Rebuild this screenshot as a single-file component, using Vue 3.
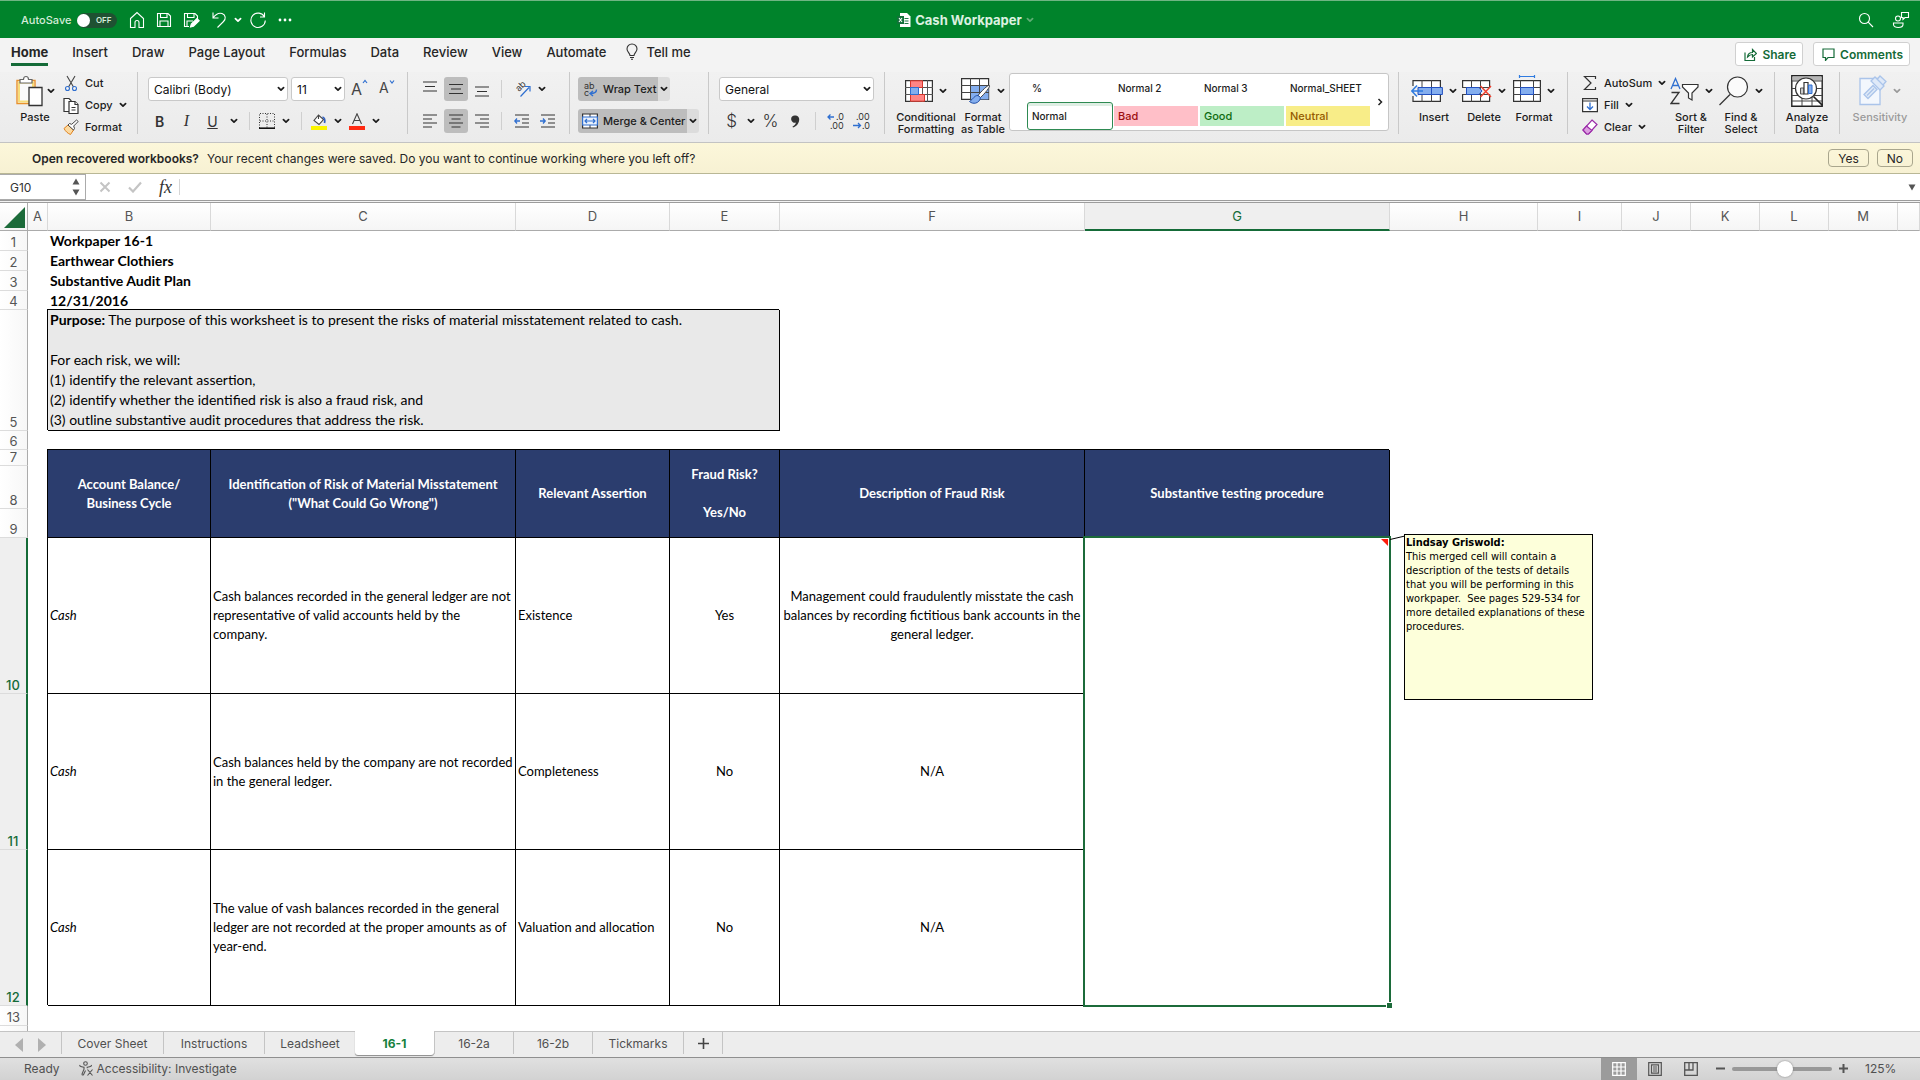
<template>
  <div class="app">
    <svg class="sprite" aria-hidden="true">
      <symbol id="chev" viewBox="0 0 8 8"><path d="M1.4 2.6 4 5.2l2.6-2.6" fill="none" stroke="currentColor" stroke-width="1.7" stroke-linecap="round" stroke-linejoin="round" /></symbol>
    </svg>

    <header class="titlebar">
      <div class="quick">
        <span class="autosave">AutoSave</span>
        <button class="toggle" aria-label="AutoSave off"><i></i>OFF</button>
        <button aria-label="Home">
          <svg width="16" height="18" viewBox="0 0 16 18" class="line"><path d="M1.500 7.500 8 1.500l6.500 6V16.500h-4.500v-5a2 2 0 0 0-4 0v5h-4.500z" /></svg>
        </button>
        <button aria-label="Save">
          <svg width="16" height="16" viewBox="0 0 16 16" class="line"><path d="M1.500 1.500h10.500l2.500 2.500v10.500h-13zM4.500 1.500v4h6.500v-4M4 14.500v-5.500h8v5.500" /></svg>
        </button>
        <button aria-label="Save as">
          <svg width="17" height="16" viewBox="0 0 17 16" class="line"><path d="M6 14.500H1.500v-13h10.500l2.500 2.500v3M4.500 1.500v4h6.500v-4M4 14.500v-5.500h6" /><path d="M7.500 15l.8-3L14 6.500l2.200 2.200-5.700 5.600z" fill="#fff" /></svg>
        </button>
        <button aria-label="Undo">
          <svg width="16" height="18" viewBox="0 0 16 18" class="line"><path d="M2 1.500v5.500h5.500M2 7C4.500 3.500 8 1.500 11 2.500c4 1.500 4 5.500 1.500 8L6.500 16.500" /></svg>
        </button>
        <button class="undo-list" aria-label="Undo list"><svg class="chev"><use href="#chev" /></svg></button>
        <button aria-label="Redo">
          <svg width="18" height="18" viewBox="0 0 18 18" class="line"><path d="M15.500 1.500v4.500h-4.500M15.500 6A7.200 7.200 0 1 0 16.300 9.500" /></svg>
        </button>
        <button aria-label="More">
          <svg width="14" height="4" viewBox="0 0 14 4"><g fill="#fff"><circle cx="2" cy="2" r="1.400" /><circle cx="7" cy="2" r="1.400" /><circle cx="12" cy="2" r="1.400" /></g></svg>
        </button>
      </div>
      <h1 class="doc">
        <svg width="14" height="14" viewBox="0 0 14 14"><path d="M3 0h7l3.500 3.500V14H3z" fill="#fff" /><path d="M7.500 5.500h4M7.500 8h4M7.500 10.500h4" stroke="#1d7b45" stroke-width="1.200" /><path d="M0 3h7v8H0z" fill="#12713a" /><path d="M2 5l3 4M5 5L2 9" stroke="#fff" stroke-width="1.100" /></svg>
        Cash Workpaper
        <svg class="chev dim"><use href="#chev" /></svg>
      </h1>
      <div class="title-right">
        <button aria-label="Search"><svg width="16" height="16" viewBox="0 0 16 16" class="line"><circle cx="6.500" cy="6.500" r="5" /><path d="M10.200 10.200 15 15" /></svg></button>
        <button aria-label="Presence"><svg width="18" height="18" viewBox="0 0 18 18" class="line"><circle cx="6" cy="7.500" r="2.500" /><path d="M1.500 12h9.500v1.500c0 4-9.500 4-9.500 0zM9.500 1.500h7v5h-3.500l-2 2v-2h-1.500z" /></svg></button>
      </div>
    </header>

    <nav class="tabs">
      <button v-for="tab in tabs" :key="tab" :class="{ active: tab === 'Home' }">{{ tab }}</button>
      <button class="tell">
        <svg width="12" height="17" viewBox="0 0 12 17" fill="none" stroke="#333" stroke-width="1.100"><path d="M4 12.500c0-2.500-3-3.500-3-6.500a5 5 0 0 1 10 0c0 3-3 4-3 6.500zM4 14.500h4M5 16.300h2" /></svg>
        Tell me
      </button>
      <div class="tab-actions">
        <button class="pill"><svg width="13" height="13" viewBox="0 0 13 13" fill="none" stroke="#156b38" stroke-width="1.200"><path d="M1 4.500v8h9.500V9M3.500 9c.3-3 2-4.500 5-4.500v-3L12.500 5.500l-4 3.500V6.500C6 6.500 5 7.500 3.500 9z" /></svg>Share</button>
        <button class="pill"><svg width="13" height="13" viewBox="0 0 13 13" fill="none" stroke="#156b38" stroke-width="1.200"><path d="M1 1h11v8.500H6l-2.500 3v-3H1z" /></svg>Comments</button>
      </div>
    </nav>

    <section class="ribbon">
      <div class="group clipboard">
        <button class="big">
          <span class="pic">
            <svg width="28" height="32" viewBox="0 0 28 32"><path d="M2 5.500h18v23H2z" fill="#fafafa" stroke="#e8912d" stroke-width="1.400" /><path d="M4 7.500h14v19H4z" fill="none" stroke="#f7dd7a" stroke-width="2" /><path d="M5 8V4.500h3.500c0-4 5-4 5 0H17V8z" fill="#fff" stroke="#666" stroke-width="1.200" /><path d="M14 12.500h13v18H14z" fill="#fff" stroke="#333" stroke-width="1.300" /></svg>
            <svg class="chev"><use href="#chev" /></svg>
          </span>
          Paste
        </button>
        <div class="stack">
          <button>
            <svg width="16" height="17" viewBox="0 0 16 17" fill="none" stroke-width="1.100"><path d="M4 1l6.500 11M12 1L5.500 12" stroke="#444" /><circle cx="4.500" cy="13.500" r="2" stroke="#2f6fd0" /><circle cx="11.500" cy="13.500" r="2" stroke="#2f6fd0" /></svg>Cut
          </button>
          <button>
            <svg width="16" height="17" viewBox="0 0 16 17" fill="#fff" stroke="#333" stroke-width="1.200"><path d="M8 14.500H1v-13h5l2 2z" /><path d="M6 4.500h6l3 3v9H6z" /><path d="M12 4.500v3h3M8.500 10.500h4M8.500 13h4" /></svg>Copy<svg class="chev"><use href="#chev" /></svg>
          </button>
          <button>
            <svg width="16" height="16" viewBox="0 0 16 16"><path d="M1 9.500 5 6l5.500 5-3 4.500C5 14.500 2.500 12.500 1 9.500z" fill="#fbd9a0" stroke="#e0801a" /><path d="M5 6l1.500-1.500 2.200.8L13.500 1l1.700 1.500-4.500 4.500.8 2.500L10.500 11z" fill="#fff" stroke="#444" /></svg>Format
          </button>
        </div>
      </div>

      <div class="group font">
        <div class="row">
          <label class="combo family"><select aria-label="Font"><option>Calibri (Body)</option></select><svg class="chev"><use href="#chev" /></svg></label>
          <label class="combo size"><select aria-label="Font size"><option>11</option></select><svg class="chev"><use href="#chev" /></svg></label>
          <button class="letter grow" aria-label="Increase font size">A<svg width="6" height="12" viewBox="0 0 6 12"><path d="M1 4l2-2.500L5 4" fill="none" stroke="#2f6fd0" stroke-width="1.200" /></svg></button>
          <button class="letter shrink" aria-label="Decrease font size">A<svg width="6" height="12" viewBox="0 0 6 12"><path d="M1 1.500L3 4l2-2.500" fill="none" stroke="#2f6fd0" stroke-width="1.200" /></svg></button>
        </div>
        <div class="row styles">
          <button class="fmt bold">B</button>
          <button class="fmt italic">I</button>
          <button class="fmt under">U</button>
          <button class="arrow" aria-label="Underline styles"><svg class="chev"><use href="#chev" /></svg></button>
          <span class="bar"></span>
          <button aria-label="Borders"><svg width="16" height="16" viewBox="0 0 16 16"><path d="M.5 15V.5h15V15M8 1v14M1 8h14" fill="none" stroke="#333" stroke-dasharray="1 1.500" /><path d="M0 15.200h16" stroke="#111" stroke-width="1.600" /></svg></button>
          <button class="arrow" aria-label="Border styles"><svg class="chev"><use href="#chev" /></svg></button>
          <span class="bar"></span>
          <button aria-label="Fill color"><svg width="16" height="17" viewBox="0 0 16 17"><path d="M7.500 2 3 7.500 8 11.500l4.500-5zM7.500 2V6" fill="#fff" stroke="#444" stroke-width="1.100" /><path d="M11.500 4c2 .5 2.800 3 2 6" fill="none" stroke="#2f5fc0" stroke-width="1.700" /><path d="M0 13h16v4H0z" fill="#fbf500" /></svg></button>
          <button class="arrow" aria-label="Fill colors"><svg class="chev"><use href="#chev" /></svg></button>
          <button aria-label="Font color"><svg width="16" height="17" viewBox="0 0 16 17"><path d="M3.500 11 8 .8 12.500 11M5.200 7.500h5.600" fill="none" stroke="#444" stroke-width="1.100" /><path d="M0 13h16v4H0z" fill="#ff2a12" /></svg></button>
          <button class="arrow" aria-label="Font colors"><svg class="chev"><use href="#chev" /></svg></button>
        </div>
      </div>

      <div class="group align">
        <div v-for="(row, r) in alignRows" :key="r" class="row">
          <button v-for="btn in row" :key="btn.name" class="sq" :class="{ on: btn.on }" :aria-label="btn.name">
            <svg width="14" height="16" viewBox="0 0 14 16"><path :d="btn.d" stroke="#333" stroke-width="1.200" /></svg>
          </button>
          <span class="bar"></span>
          <template v-if="r === 0">
            <button class="orient" aria-label="Orientation"><svg width="18" height="18" viewBox="0 0 18 18"><text x="0" y="0" transform="translate(5 12) rotate(-45)" class="glyph">ab</text><path d="M6.500 16.500 15 7.500M11 6.500h5v5" fill="none" stroke="#2f6fd0" stroke-width="1.200" /></svg></button>
            <button class="arrow" aria-label="Orientation options"><svg class="chev"><use href="#chev" /></svg></button>
          </template>
          <template v-else>
            <button class="outdent" aria-label="Decrease indent"><svg width="15" height="16" viewBox="0 0 15 16"><path d="M1 2h14M8 6h7M8 10h7M1 14h14" stroke="#333" stroke-width="1.200" /><path d="M6 8H.8M3 5.500.8 8 3 10.500" fill="none" stroke="#2f6fd0" stroke-width="1.300" /></svg></button>
            <button class="indent" aria-label="Increase indent"><svg width="15" height="16" viewBox="0 0 15 16"><path d="M1 2h14M8 6h7M8 10h7M1 14h14" stroke="#333" stroke-width="1.200" /><path d="M0 8h5.200M3 5.500 5.200 8 3 10.500" fill="none" stroke="#2f6fd0" stroke-width="1.300" /></svg></button>
          </template>
        </div>
      </div>

      <div class="group wrap">
        <div class="row">
          <button class="split">
            <svg width="16" height="18" viewBox="0 0 16 18"><text x="2" y="9" class="glyph">ab</text><text x="2" y="16" class="glyph">c</text><path d="M14.500 9.500c0 3-2 4-6 4M11 11l-3 2.500 3 2.500" fill="none" stroke="#2f6fd0" stroke-width="1.400" /></svg>Wrap Text
          </button>
          <button class="split-end" aria-label="Wrap options"><svg class="chev"><use href="#chev" /></svg></button>
        </div>
        <div class="row">
          <button class="split">
            <svg width="16" height="16" viewBox="0 0 16 16"><path d="M.6 1h14.800v14H.6z" fill="#fff" stroke="#333" stroke-width="1.200" /><path d="M8 1v3M8 12v3" stroke="#333" /><path d="M.6 4h14.800v8H.6z" fill="#eaf2fd" stroke="#2f6fd0" stroke-width="1.200" /><path d="M3 8h10M5 6 3 8l2 2M11 6l2 2-2 2" fill="none" stroke="#2f6fd0" stroke-width="1.200" /></svg>Merge &amp; Center
          </button>
          <button class="split-end" aria-label="Merge options"><svg class="chev"><use href="#chev" /></svg></button>
        </div>
      </div>

      <div class="group number">
        <div class="row">
          <label class="combo wide"><select aria-label="Number format"><option>General</option></select><svg class="chev"><use href="#chev" /></svg></label>
        </div>
        <div class="row symbols">
          <button class="sym">$</button>
          <button class="arrow" aria-label="Currencies"><svg class="chev"><use href="#chev" /></svg></button>
          <button class="sym">%</button>
          <button class="comma" aria-label="Comma style"><svg width="9" height="13" viewBox="0 0 9 13"><path d="M4 .5a3.600 3.600 0 0 1 4.200 3.800c0 4-2.500 7-6.200 8.200l-.5-1c2-1 3.200-2.200 3.400-4A3.600 3.600 0 1 1 4 .5z" fill="#333" /></svg></button>
          <span class="bar"></span>
          <button aria-label="Increase decimal"><svg width="18" height="18" viewBox="0 0 18 18"><text x="9" y="8" class="digits">.0</text><text x="3" y="17" class="digits">.00</text><path d="M7 5H1M3.500 2.500 1 5l2.500 2.500" fill="none" stroke="#2f6fd0" stroke-width="1.300" /></svg></button>
          <button class="less" aria-label="Decrease decimal"><svg width="18" height="18" viewBox="0 0 18 18"><text x="3" y="8" class="digits">.00</text><text x="9" y="17" class="digits">.0</text><path d="M0 13.500h7M5 11l2.500 2.500L5 16" fill="none" stroke="#2f6fd0" stroke-width="1.300" /></svg></button>
        </div>
      </div>

      <div class="group look">
        <button class="big cf">
          <span class="pic">
            <svg width="28" height="22" viewBox="0 0 28 22"><path d="M.6.6h26.800v20.800H.6z" fill="#fff" stroke="#333" stroke-width="1.200" /><path d="M0 7.500h28M0 14.500h28M5.500 0v22M17.500 0v22M22.500 0v22" stroke="#555" /><path d="M5.500.8h12v6.700h-12zM5.500 14.500h14v6.700h-14z" fill="#ff8585" stroke="#d9372c" /><path d="M5.500 7.500h8v7h-8z" fill="#84aeee" stroke="#2f6fd0" /></svg>
            <svg class="chev"><use href="#chev" /></svg>
          </span>
          Conditional<br>Formatting
        </button>
        <button class="big ft">
          <span class="pic">
            <svg width="30" height="28" viewBox="0 0 30 28"><path d="M.6 1.600h27v20.800H.6z" fill="#fff" stroke="#333" stroke-width="1.200" /><path d="M9.500 9h18v13.400h-18z" fill="#84aeee" /><path d="M0 8.500h28M0 15.500h28M9.500 1v21M18.500 1v21" stroke="#444" /><path d="M28.500 8.500c1 1-5 8.500-9 12l-2.500-2c3-4 10-11 11.500-10z" fill="#fff" stroke="#444" /><path d="M17 18.500c-4 0-4 3-8.500 6 3 3 10 2.500 11-4z" fill="#84aeee" stroke="#2250a8" /></svg>
            <svg class="chev"><use href="#chev" /></svg>
          </span>
          Format<br>as Table
        </button>
        <div class="gallery">
          <div class="swatches">
            <button v-for="s in cellStyles" :key="s.label" class="swatch" :class="s.tone">{{ s.label }}</button>
          </div>
          <button class="more" aria-label="More styles"><svg width="6" height="8" viewBox="0 0 6 8"><path d="M1.500 1l3 3-3 3" fill="none" stroke="#222" stroke-width="1.500" /></svg></button>
        </div>
      </div>

      <div class="group cells">
        <button class="big w50">
          <span class="pic">
            <svg width="32" height="22" viewBox="0 0 32 22"><path d="M2 .6h27.400v20.800H2z" fill="#fff" stroke="#333" stroke-width="1.200" /><path d="M2 7.500h28M2 14.500h28M11 0v22M20.500 0v22" stroke="#444" /><path d="M0 6h8v10H0z" fill="#f0f0f0" /><path d="M7 7.500h24.400v7H7z" fill="#84aeee" stroke="#2250c0" /><path d="M20.500 8v6" stroke="#2250c0" /><path d="M12 11H1M6 5.500.8 11 6 16.500" fill="none" stroke="#2f7be0" stroke-width="1.500" /></svg>
            <svg class="chev"><use href="#chev" /></svg>
          </span>
          Insert
        </button>
        <button class="big w50">
          <span class="pic">
            <svg width="30" height="22" viewBox="0 0 30 22"><path d="M.6.6h27v20.800H.6z" fill="#fff" stroke="#333" stroke-width="1.200" /><path d="M0 7.500h28M0 14.500h28M9.500 0v22M18.500 0v22" stroke="#444" /><path d="M0 8h5v6H0zM20 8h10v6H20z" fill="#f0f0f0" /><path d="M4.500 7.500H17l3 3.500-3 3.500H4.500z" fill="#84aeee" stroke="#2250c0" /><path d="M18.500 6 29 17M29 6 18.500 17" stroke="#f0402f" stroke-width="1.400" /></svg>
            <svg class="chev"><use href="#chev" /></svg>
          </span>
          Delete
        </button>
        <button class="big w50">
          <span class="pic">
            <svg width="28" height="32" viewBox="0 0 28 32"><path d="M.6 5.600h26.800v20.800H.6z" fill="#fff" stroke="#333" stroke-width="1.200" /><path d="M0 12.500h28M0 19.500h28M7.500 5v22M20.500 5v22" stroke="#444" /><path d="M7.500 12.500h13v7h-13z" fill="#84aeee" stroke="#2250c0" /><path d="M6.500 1.500h15M6.500 0v3M21.500 0v3" stroke="#2f7be0" stroke-width="1.200" /></svg>
            <svg class="chev"><use href="#chev" /></svg>
          </span>
          Format
        </button>
      </div>

      <div class="group editing">
        <div class="stack">
          <button><svg width="16" height="16" viewBox="0 0 16 16"><path d="M13.500 4V1.500H2.500L9 8l-6.500 6.500h11V12" fill="none" stroke="#333" stroke-width="1.200" /></svg>AutoSum<svg class="chev"><use href="#chev" /></svg></button>
          <button><svg width="16" height="16" viewBox="0 0 16 16"><path d="M.6 1.600h14.800v13H.6zM.6 4h14.800" fill="#fff" stroke="#333" stroke-width="1.200" /><path d="M8 5.500v7M5 9.500l3 3 3-3" fill="none" stroke="#2f6fd0" stroke-width="1.300" /></svg>Fill<svg class="chev"><use href="#chev" /></svg></button>
          <button><svg width="16" height="16" viewBox="0 0 16 16"><path d="M10 1l5 4.500L6.500 15h-2L1 11z" fill="#fff" stroke="#9a2aa8" stroke-width="1.200" /><path d="M4.500 7 10 11.500 6.500 15h-2L1 11z" fill="#dc9fe0" stroke="#9a2aa8" stroke-width="1.200" /></svg>Clear<svg class="chev"><use href="#chev" /></svg></button>
        </div>
        <button class="big w50">
          <span class="pic">
            <svg width="29" height="28" viewBox="0 0 29 28" fill="none"><path d="M1 12 5.500 1.500 10 12M2.500 8.500h6" stroke="#2f6fd0" stroke-width="1.300" /><path d="M1.500 15.500h7.500L1 26.500h8.500" stroke="#333" stroke-width="1.300" /><path d="M12.500 7.500h15.500v2.500l-6 6v7l-3.500-2v-5l-6-6z" fill="#fff" stroke="#333" stroke-width="1.200" /></svg>
            <svg class="chev"><use href="#chev" /></svg>
          </span>
          Sort &amp;<br>Filter
        </button>
        <button class="big w50">
          <span class="pic">
            <svg width="30" height="30" viewBox="0 0 30 30"><path d="M.5 29 11 18.500" stroke="#333" stroke-width="1.300" /><circle cx="18.500" cy="11" r="10" fill="#fbfbfb" stroke="#333" stroke-width="1.200" /></svg>
            <svg class="chev"><use href="#chev" /></svg>
          </span>
          Find &amp;<br>Select
        </button>
      </div>

      <div class="group analyze">
        <button class="big w50">
          <span class="pic">
            <svg width="32" height="32" viewBox="0 0 32 32"><path d="M.8.800h30.400v30.400H.8z" fill="#fff" stroke="#222" stroke-width="1.400" /><path d="M1.500 1.500h29v4h-29z" fill="#b5b5b5" /><path d="M1 6h30M1 13.500h30M1 20.500h30M1 26h30M11 20v11M21 20v11" stroke="#444" /><circle cx="15" cy="13.500" r="10.500" fill="#fff" stroke="#333" stroke-width="1.200" /><path d="M9.500 13h3.500v6H9.500z" fill="#ccc" stroke="#555" /><path d="M13 7.500h4v11.500h-4z" fill="#fff" stroke="#333" stroke-width="1.200" /><path d="M17.500 10h3.500v8.500h-3.500z" fill="#84aeee" stroke="#2f6fd0" /><path d="M22.500 21.500l9 9" stroke="#222" stroke-width="1.600" /></svg>
          </span>
          Analyze<br>Data
        </button>
      </div>

      <div class="group sens">
        <button class="big w50 off" disabled>
          <span class="pic">
            <svg width="28" height="32" viewBox="0 0 28 32" stroke="#aac4ea" stroke-width="1.300"><path d="M1 3.500h20v26H1z" fill="#f3f7fd" /><path d="M5 19.500 14 10.500l4 4L9 23.500zM8 20.500l7-7" fill="#dfe9f8" /><path d="M12 6l4-4 9 9-4 4zM18 4.500l3-3.500 6 5.500-3 3.500" fill="#dfe9f8" /></svg>
            <svg class="chev"><use href="#chev" /></svg>
          </span>
          Sensitivity
        </button>
      </div>
    </section>

    <div class="notice">
      <strong>Open recovered workbooks?</strong>
      <span>Your recent changes were saved. Do you want to continue working where you left off?</span>
      <button class="first">Yes</button>
      <button>No</button>
    </div>

    <div class="formula">
      <div class="namebox">
        <input aria-label="Name box" value="G10">
        <svg width="8" height="20" viewBox="0 0 8 20" fill="#555"><path d="M4 1.500 7.500 7.500h-7zM4 18.500.5 12.500h7z" /></svg>
      </div>
      <button class="cancel" aria-label="Cancel"><svg width="12" height="12" viewBox="0 0 12 12"><path d="M1.500 1.500l9 9M10.500 1.500l-9 9" stroke="#c4c4c4" stroke-width="2" /></svg></button>
      <button class="enter" aria-label="Enter"><svg width="14" height="12" viewBox="0 0 14 12"><path d="M1 6.500 5 10.500 13 1.500" fill="none" stroke="#c4c4c4" stroke-width="2.200" /></svg></button>
      <button class="fx">fx</button>
      <input class="entry" aria-label="Formula">
      <button class="expand" aria-label="Expand"><svg width="8" height="7" viewBox="0 0 8 7"><path d="M.5.5h7L4 6.500z" fill="#555" /></svg></button>
    </div>

    <main class="sheet">
      <table>
        <colgroup>
          <col v-for="c in columns" :key="c.name" :style="{ width: c.width + 'px' }">
          <col>
        </colgroup>
        <thead>
          <tr>
            <th v-for="c in columns" :key="c.name" :class="{ corner: !c.name, picked: c.name === 'G' }">
              <svg v-if="!c.name" width="21" height="21" viewBox="0 0 21 21"><path d="M21 0v21H0z" fill="#1c6b3a" /></svg>
              <template v-else>{{ c.name }}</template>
            </th>
            <th></th>
          </tr>
        </thead>
        <tbody>
          <tr v-for="(line, i) in heading" :key="line" :class="i === 3 ? 'h19' : 'h20'">
            <th>{{ i + 1 }}</th>
            <td></td>
            <td colspan="13" class="title">{{ line }}</td>
          </tr>
          <tr class="h121">
            <th>5</th>
            <td></td>
            <td colspan="4" class="boxed purpose"><b>Purpose:</b> The purpose of this worksheet is to present the risks of material misstatement related to cash.<br><br>For each risk, we will:<br>(1) identify the relevant assertion,<br>(2) identify whether the identified risk is also a fraud risk, and<br>(3) outline substantive audit procedures that address the risk.</td>
            <td colspan="9"></td>
          </tr>
          <tr class="h19"><th>6</th><td colspan="14"></td></tr>
          <tr class="h16">
            <th>7</th>
            <td></td>
            <td v-for="h in tableHead" :key="h" rowspan="3" class="boxed head">{{ h }}</td>
            <td colspan="7"></td>
          </tr>
          <tr class="h43"><th>8</th><td></td><td colspan="7"></td></tr>
          <tr class="h29"><th>9</th><td></td><td colspan="7"></td></tr>
          <tr v-for="(risk, i) in risks" :key="risk.text" class="h156">
            <th class="picked">{{ i + 10 }}</th>
            <td></td>
            <td class="boxed"><i>Cash</i></td>
            <td class="boxed">{{ risk.text }}</td>
            <td class="boxed">{{ risk.assertion }}</td>
            <td class="boxed center">{{ risk.fraud }}</td>
            <td class="boxed center">{{ risk.description }}</td>
            <td v-if="i === 0" rowspan="3" class="active-cell">
              <span class="selection"><i class="handle"></i></span>
              <svg class="flag" width="7" height="7" viewBox="0 0 7 7"><path d="M0 0h7v7z" fill="#ff1c0c" /></svg>
              <svg class="leader" width="15" height="6" viewBox="0 0 15 6"><path d="M0 4.500 15 1" stroke="#000" /></svg>
              <aside class="note"><b>Lindsay Griswold:</b><br>This merged cell will contain a description of the tests of details that you will be performing in this workpaper.&nbsp; See pages 529-534 for more detailed explanations of these procedures.</aside>
            </td>
            <td colspan="7"></td>
          </tr>
          <tr class="h20"><th>13</th><td colspan="14"></td></tr>
          <tr class="h20"><th></th><td colspan="14"></td></tr>
        </tbody>
      </table>
    </main>

    <footer>
      <div class="sheets">
        <button class="nav" aria-label="Previous sheet"><svg width="8" height="14" viewBox="0 0 8 14"><path d="M8 0v14L0 7z" fill="#b0b0b0" /></svg></button>
        <button class="nav" aria-label="Next sheet"><svg width="8" height="14" viewBox="0 0 8 14"><path d="M0 0v14l8-7z" fill="#b0b0b0" /></svg></button>
        <button v-for="s in sheets" :key="s.name" class="sheet-tab" :class="{ current: s.name === current }" :style="{ width: s.width + 'px' }" @click="current = s.name">{{ s.name }}</button>
        <button class="sheet-tab add" aria-label="Add sheet"><svg width="11" height="11" viewBox="0 0 11 11"><path d="M5.500 0v11M0 5.500h11" stroke="#444" stroke-width="1.600" /></svg></button>
      </div>
      <div class="status">
        <span class="ready">Ready</span>
        <svg width="15" height="15" viewBox="0 0 15 15" fill="none" stroke="#555" stroke-width="1.100"><circle cx="6.500" cy="2.500" r="1.800" /><path d="M1 4c-.8 1 .3 1.500 4 2.200v2L3 13c0 1.500 1.200 1.200 1.600.4L6.500 9.500M12.200 4c.8 1-.3 1.500-4 2.200v1M8.500 8.500l5 6M13.500 8.500l-5 6" /></svg>
        <span>Accessibility: Investigate</span>
        <div class="views">
          <button class="view on" aria-label="Normal view"><svg width="14" height="14" viewBox="0 0 14 14"><path d="M.7.700h12.600v12.600H.7zM5 0v14M9 0v14M0 5h14M0 9h14" fill="none" stroke="#fff" stroke-width="1.200" /></svg></button>
          <button class="view" aria-label="Page layout"><svg width="14" height="14" viewBox="0 0 14 14"><path d="M.7.700h12.600v12.600H.7zM3.500 2.800h7v8.400h-7zM5 5h4M5 7h4M5 9h4" fill="none" stroke="#555" stroke-width="1.200" /></svg></button>
          <button class="view" aria-label="Page break preview"><svg width="14" height="14" viewBox="0 0 14 14"><path d="M.7.700h12.600v12.600H.7zM1 8h8V1M5 1v7" fill="none" stroke="#555" stroke-width="1.300" /></svg></button>
          <button class="zoom-btn" aria-label="Zoom out"><svg width="9" height="9" viewBox="0 0 9 9"><path d="M0 4.500h9" stroke="#555" stroke-width="2" /></svg></button>
          <input v-model="zoom" type="range" min="0" max="100" aria-label="Zoom">
          <button class="zoom-btn" aria-label="Zoom in"><svg width="9" height="9" viewBox="0 0 9 9"><path d="M0 4.500h9M4.500 0v9" stroke="#555" stroke-width="2" /></svg></button>
          <span class="percent">125%</span>
        </div>
      </div>
    </footer>
  </div>
</template>

<script setup>
import { ref } from 'vue';

const tabs = ['Home', 'Insert', 'Draw', 'Page Layout', 'Formulas', 'Data', 'Review', 'View', 'Automate'];

const alignRows = [
  [
    { name: 'Top align', d: 'M0 1h14M2 5.500h10M0 10h14' },
    { name: 'Middle align', d: 'M0 3.500h14M2 8h10M0 12.500h14', on: true },
    { name: 'Bottom align', d: 'M0 6h14M2 10.500h10M0 15h14' }
  ],
  [
    { name: 'Align left', d: 'M0 2h14M0 6h9M0 10h14M0 14h9' },
    { name: 'Center', d: 'M0 2h14M2.500 6h9M0 10h14M2.500 14h9', on: true },
    { name: 'Align right', d: 'M0 2h14M5 6h9M0 10h14M5 14h9' }
  ]
];

const cellStyles = [
  { label: '%', tone: 'plain' },
  { label: 'Normal 2', tone: 'plain' },
  { label: 'Normal 3', tone: 'plain' },
  { label: 'Normal_SHEET', tone: 'plain' },
  { label: 'Normal', tone: 'chosen' },
  { label: 'Bad', tone: 'bad' },
  { label: 'Good', tone: 'good' },
  { label: 'Neutral', tone: 'neutral' }
];

const columns = [
  { name: '', width: 28 },
  { name: 'A', width: 20 },
  { name: 'B', width: 163 },
  { name: 'C', width: 305 },
  { name: 'D', width: 154 },
  { name: 'E', width: 110 },
  { name: 'F', width: 305 },
  { name: 'G', width: 305 },
  { name: 'H', width: 148 },
  { name: 'I', width: 84 },
  { name: 'J', width: 69 },
  { name: 'K', width: 69 },
  { name: 'L', width: 69 },
  { name: 'M', width: 69 }
];

const heading = ['Workpaper 16-1', 'Earthwear Clothiers', 'Substantive Audit Plan', '12/31/2016'];

const tableHead = [
  'Account Balance/\nBusiness Cycle',
  'Identification of Risk of Material Misstatement\n("What Could Go Wrong")',
  'Relevant Assertion',
  'Fraud Risk?\n\nYes/No',
  'Description of Fraud Risk',
  'Substantive testing procedure'
];

const risks = [
  {
    text: 'Cash balances recorded in the general ledger are not representative of valid accounts held by the company.',
    assertion: 'Existence',
    fraud: 'Yes',
    description: 'Management could fraudulently misstate the cash balances by recording fictitious bank accounts in the general ledger.'
  },
  {
    text: 'Cash balances held by the company are not recorded in the general ledger.',
    assertion: 'Completeness',
    fraud: 'No',
    description: 'N/A'
  },
  {
    text: 'The value of vash balances recorded in the general ledger are not recorded at the proper amounts as of year-end.',
    assertion: 'Valuation and allocation',
    fraud: 'No',
    description: 'N/A'
  }
];

const sheets = [
  { name: 'Cover Sheet', width: 102 },
  { name: 'Instructions', width: 101 },
  { name: 'Leadsheet', width: 91 },
  { name: '16-1', width: 79 },
  { name: '16-2a', width: 79 },
  { name: '16-2b', width: 79 },
  { name: 'Tickmarks', width: 91 }
];

const current = ref('16-1');
const zoom = ref(54);
</script>

<style>
body {
  margin: 0;
  overflow: hidden;
}
</style>

<style scoped>
* {
  box-sizing: border-box;
}

.app {
  display: flex;
  flex-direction: column;
  height: 100vh;
  font-family: Inter, "Liberation Sans", sans-serif;
  font-size: 13px;
  color: #262626;
  background: #fff;
}

.sprite {
  display: none;
}

button {
  display: inline-flex;
  align-items: center;
  justify-content: center;
  padding: 0;
  border: 0;
  background: none;
  font: inherit;
  color: inherit;
  white-space: nowrap;
}

svg {
  display: block;
  flex: none;
}

.chev {
  width: 8px;
  height: 8px;
}

.line {
  fill: none;
  stroke: #fff;
  stroke-width: 1.1;
}

/* title bar */
.titlebar {
  display: grid;
  grid-template-columns: 1fr auto 1fr;
  align-items: center;
  height: 38px;
  padding: 1px 10px 0 21px;
  border-top: 1px solid #6fb583;
  background: #00832b;
  color: #fff;
}

.quick,
.title-right {
  display: flex;
  align-items: center;
}

.quick {
  gap: 11px;
}

.autosave {
  font-size: 11px;
  font-weight: 500;
  color: #d5ecd9;
}

.toggle {
  width: 40px;
  height: 15px;
  margin: 0 1px 0 -5px;
  gap: 6px;
  padding-right: 6px;
  border-radius: 8px;
  background: #1f5132;
  color: #d5ecd9;
  font-size: 8px;
  font-weight: 600;
}

.toggle i {
  width: 13px;
  height: 13px;
  border-radius: 50%;
  background: #fff;
}

.undo-list {
  margin: 0 -4px;
}

.doc {
  display: flex;
  align-items: center;
  gap: 4px;
  margin: 0;
  font-size: 13px;
  font-weight: 700;
  color: #dcf1e0;
}

.dim {
  color: #5fae75;
}

.title-right {
  justify-content: flex-end;
  gap: 18px;
}

/* ribbon tabs */
.tabs {
  display: flex;
  gap: 24px;
  height: 34px;
  padding: 0 10px 0 11px;
  background: #f3f3f3;
  font-weight: 500;
}

.tabs > button {
  height: 28px;
  padding-top: 2px;
  border-bottom: 3px solid transparent;
}

.tabs > .active {
  border-bottom-color: #156b38;
  font-weight: 700;
}

.tabs > .tell {
  gap: 8px;
  margin-left: -4px;
}

.tab-actions {
  display: flex;
  gap: 10px;
  margin-left: auto;
  padding-top: 4px;
}

.pill {
  height: 24px;
  gap: 5px;
  padding: 0 6px 0 8px;
  border: 1px solid #d0d0d0;
  border-radius: 3px;
  background: #fff;
  color: #156b38;
  font-size: 12px;
  font-weight: 600;
}

/* ribbon */
.ribbon {
  display: grid;
  grid-template-columns: 138px 270px 162px 139px 176px 1fr 169px 207px 65px 80px;
  height: 71px;
  border-bottom: 1px solid #c3c3c3;
  background: linear-gradient(#f1f1f1, #ebebeb);
  font-size: 11px;
  font-weight: 500;
  color: #1c1c1c;
}

.group {
  height: 62px;
  border-right: 1px solid #c9c9c9;
}

.group.sens {
  border-right: 0;
}

.row {
  display: flex;
  align-items: center;
  height: 24px;
  margin-bottom: 8px;
}

.font,
.align,
.wrap,
.number {
  padding: 5px 0 0 10px;
}

.clipboard,
.look,
.cells,
.editing,
.analyze,
.sens {
  display: flex;
  align-items: flex-start;
}

.big {
  flex-direction: column;
  justify-content: flex-start;
  padding-top: 2px;
  line-height: 12px;
}

.pic {
  display: flex;
  align-items: center;
  gap: 6px;
  height: 34px;
  margin-bottom: 3px;
}

.clipboard .big {
  width: 40px;
  margin-left: 15px;
}

.clipboard .pic {
  gap: 4px;
}

.stack {
  display: flex;
  flex-direction: column;
  gap: 2px;
  padding: 1px 0 0 8px;
}

.stack button {
  height: 20px;
  gap: 6px;
  justify-content: flex-start;
}

.combo {
  position: relative;
  display: flex;
  height: 24px;
}

.combo select {
  width: 100%;
  padding: 0 5px;
  border: 1px solid #c9c9c9;
  border-radius: 3px;
  background: #fff;
  appearance: none;
  font: 400 12px Inter, sans-serif;
  color: #111;
}

.combo .chev {
  position: absolute;
  top: 8px;
  right: 3px;
}

.family {
  width: 140px;
}

.size {
  width: 54px;
  margin-left: 3px;
}

.wide {
  width: 155px;
}

.letter {
  align-items: flex-start;
  height: 20px;
  font-weight: 400;
  color: #444;
}

.grow {
  margin-left: 6px;
  font-size: 16px;
}

.shrink {
  margin-left: 11px;
  font-size: 14px;
}

.styles {
  gap: 5px;
}

.fmt {
  width: 21px;
  font-size: 14px;
  font-weight: 400;
  color: #333;
}

.fmt.bold {
  width: 23px;
  font-weight: 600;
}

.fmt.italic {
  font-family: "Liberation Serif", serif;
  font-size: 16px;
  font-style: italic;
}

.fmt.under {
  text-decoration: underline;
}

.arrow {
  width: 12px;
}

.bar {
  width: 1px;
  height: 18px;
  margin: 0 5px;
  background: #cfcfcf;
}

.styles .bar {
  margin: 0 4px;
}

.sq {
  width: 24px;
  height: 24px;
  margin-right: 2px;
  border-radius: 3px;
}

.sq.on {
  background: #bdbdbd;
}

.align .bar {
  margin: 0 12px 0 5px;
}

.orient {
  width: 18px;
  margin-right: 4px;
}

.outdent {
  margin-right: 11px;
}

.glyph,
.digits {
  font: 400 9px Inter, sans-serif;
  fill: #333;
}

.wrap {
  padding-left: 8px;
}

.split {
  height: 24px;
  gap: 5px;
  padding: 0 2px 0 4px;
  border-radius: 3px 0 0 3px;
  background: #bdbdbd;
}

.split-end {
  width: 12px;
  height: 24px;
  border-radius: 0 3px 3px 0;
  background: #dcdcdc;
}

.sym {
  width: 17px;
  font-size: 17px;
  font-weight: 300;
  color: #333;
}

.symbols {
  gap: 5px;
  padding-left: 4px;
}

.comma {
  margin-left: 7px;
}

.symbols .bar {
  margin: 0 6px 0 10px;
}

.less {
  margin-left: 3px;
}

.cf {
  width: 60px;
  margin-left: 11px;
}

.ft {
  width: 48px;
  margin: 0 2px 0 3px;
}

.gallery {
  display: flex;
  flex: 1;
  height: 58px;
  margin: 1px 9px 0 0;
  border: 1px solid #c6c6c6;
  border-radius: 3px;
  background: #fff;
}

.swatches {
  display: grid;
  grid-template-columns: repeat(4, 1fr);
  grid-template-rows: 28px 28px;
  flex: 1;
  padding-left: 17px;
}

.swatch {
  justify-content: flex-start;
  margin: 4px 1px;
  padding-left: 4px;
  font-size: 10px;
}

.chosen {
  margin: 0;
  border: 1px solid #2e8a52;
  border-radius: 3px;
  box-shadow: inset 0 3px 0 #dfeee4;
}

.bad {
  background: #ffbfc8;
  color: #9c0f12;
  font-size: 11px;
}

.good {
  background: #bdeec6;
  color: #0f6b12;
  font-size: 11px;
}

.neutral {
  background: #f8ed88;
  color: #955b00;
  font-size: 11px;
}

.more {
  width: 17px;
}

.cells {
  padding-left: 10px;
}

.w50 {
  width: 50px;
}

.editing .stack {
  width: 98px;
  padding-left: 14px;
}

.analyze,
.sens {
  justify-content: center;
}

.off {
  color: #9a9a9a;
}

/* recovery notice */
.notice {
  display: flex;
  align-items: center;
  height: 31px;
  padding: 0 7px 0 32px;
  border-bottom: 1px solid #b9b795;
  background: linear-gradient(#fcf7da, #f7f1d3);
  font-size: 12px;
}

.notice strong {
  margin-right: 8px;
  font-weight: 600;
}

.notice button {
  height: 18px;
  padding: 0 9px;
  border: 1px solid #a9a68d;
  border-radius: 4px;
}

.notice .first {
  margin: 0 8px 0 auto;
}

/* formula bar */
.formula {
  display: flex;
  align-items: center;
  height: 29px;
  padding-bottom: 2px;
  border-bottom: 1px solid #9c9c9c;
  background: linear-gradient(#fff 26px, #9c9c9c 26px, #9c9c9c 27px, #f3f3f3 27px);
}

.namebox {
  display: flex;
  align-items: center;
  width: 86px;
  height: 26px;
  padding-right: 5px;
  border: 1px solid #ababab;
  border-left: 0;
}

.namebox input {
  width: 100%;
  min-width: 0;
  padding: 0 0 0 10px;
  border: 0;
  font: 400 12px Inter, sans-serif;
  color: #333;
}

.cancel {
  margin-left: 13px;
}

.enter {
  margin-left: 17px;
}

.fx {
  margin: 0 7px 0 17px;
  font: italic 18px/20px "Liberation Serif", serif;
  color: #333;
}

.entry {
  flex: 1;
  height: 16px;
  border: 0;
  border-left: 1px solid #d5d5d5;
}

.expand {
  margin-right: 4px;
}

/* worksheet */
.sheet {
  flex: 1 1 0;
  min-height: 0;
  overflow: hidden;
  font-family: Lato, "Noto Sans", sans-serif;
  color: #000;
}

table {
  width: 100%;
  table-layout: fixed;
  border-collapse: separate;
  border-spacing: 0;
  font-size: 13px;
  line-height: 19px;
}

td,
th {
  padding: 0;
}

th {
  font-family: Inter, sans-serif;
  font-size: 13px;
  font-weight: 400;
  color: #555;
}

thead th {
  height: 28px;
  border-right: 1px solid #d9d9d9;
  border-bottom: 1px solid #ababab;
  background: linear-gradient(#fff, #f5f5f5);
}

thead .picked {
  border-bottom: 2px solid #156b38;
  background: #efefef;
  color: #156b38;
}

.corner {
  border-right-color: #ababab;
}

.corner svg {
  margin: 2px 0 0 4px;
}

tbody th {
  padding-bottom: 1px;
  vertical-align: bottom;
  border-right: 1px solid #ababab;
  border-bottom: 1px solid #dcdcdc;
  background: linear-gradient(90deg, #fff, #f7f7f7);
  line-height: 14px;
}

tbody .picked {
  border-right: 2px solid #156b38;
  background: #efefef;
  font-weight: 500;
  color: #156b38;
}

.h16 {
  height: 16px;
}

.h19 {
  height: 19px;
}

.h20 {
  height: 20px;
}

.h29 {
  height: 29px;
}

.h43 {
  height: 43px;
}

.h121 {
  height: 121px;
}

.h156 {
  height: 156px;
}

.title {
  padding-left: 2px;
  font-size: 14px;
  font-weight: 700;
  line-height: 18px;
}

/* right and bottom rules are borders, left and top come from the shadow */
.boxed {
  padding: 0 2px;
  border-right: 1px solid #000;
  border-bottom: 1px solid #000;
  box-shadow: -1px -1px 0 #000;
}

.purpose {
  background: #e9e9e9;
  font-size: 14px;
  line-height: 20px;
}

.head {
  background: #2b3d6e;
  color: #fff;
  font-weight: 700;
  text-align: center;
  white-space: pre-line;
}

.center {
  text-align: center;
}

.active-cell {
  position: relative;
}

.selection {
  position: absolute;
  inset: -2px -1px -1px -2px;
  border: 2px solid #1c6b3a;
}

.handle {
  position: absolute;
  right: -4px;
  bottom: -4px;
  width: 7px;
  height: 7px;
  border: 1px solid #fff;
  background: #1c6b3a;
}

.flag {
  position: absolute;
  top: 1px;
  right: 2px;
}

.leader {
  position: absolute;
  top: -3px;
  left: 100%;
}

.note {
  position: absolute;
  top: -4px;
  left: calc(100% + 14px);
  width: 189px;
  height: 166px;
  padding: 1px 0 0 1px;
  border: 1px solid #000;
  background: #fdffda;
  font-family: "DejaVu Sans Condensed", "DejaVu Sans", sans-serif;
  font-size: 11px;
  line-height: 14px;
}

/* sheet tabs */
.sheets {
  display: flex;
  height: 26px;
  padding-left: 15px;
  border-top: 1px solid #c4c4c4;
  background: #ededed;
  font-size: 12px;
  color: #505050;
}

.nav {
  width: 8px;
  margin-right: 15px;
}

.sheet-tab {
  height: 22px;
  border-left: 1px solid #c4c4c4;
}

.current {
  height: 24px;
  margin-top: -1px;
  border-left: 0;
  border-radius: 0 0 3px 3px;
  background: #fff;
  box-shadow: 0 1px 1px #8a8a8a;
  color: #15803c;
  font-weight: 700;
}

.add {
  width: 40px;
  border-right: 1px solid #c4c4c4;
}

/* status bar */
.status {
  display: flex;
  align-items: center;
  height: 23px;
  padding: 0 0 1px 24px;
  border-top: 1px solid #8f8f8f;
  background: linear-gradient(#e0e0e0, #d2d2d2);
  font-size: 12px;
  color: #505050;
}

.ready {
  margin-right: 19px;
}

.status > svg {
  margin-right: 3px;
}

.views {
  display: flex;
  align-items: center;
  margin-left: auto;
}

.view {
  width: 36px;
  height: 22px;
}

.view.on {
  background: #9b9b9b;
}

.zoom-btn {
  margin: 0 7px;
}

input[type="range"] {
  width: 100px;
  height: 16px;
  margin: 0;
  background: none;
  appearance: none;
}

input[type="range"]::-webkit-slider-runnable-track {
  height: 4px;
  border-radius: 2px;
  background: #989898;
}

input[type="range"]::-webkit-slider-thumb {
  width: 16px;
  height: 16px;
  margin-top: -6px;
  border-radius: 50%;
  background: #fff;
  box-shadow: 0 0 2px #777;
  appearance: none;
}

.percent {
  width: 55px;
  margin-left: 10px;
}
</style>
